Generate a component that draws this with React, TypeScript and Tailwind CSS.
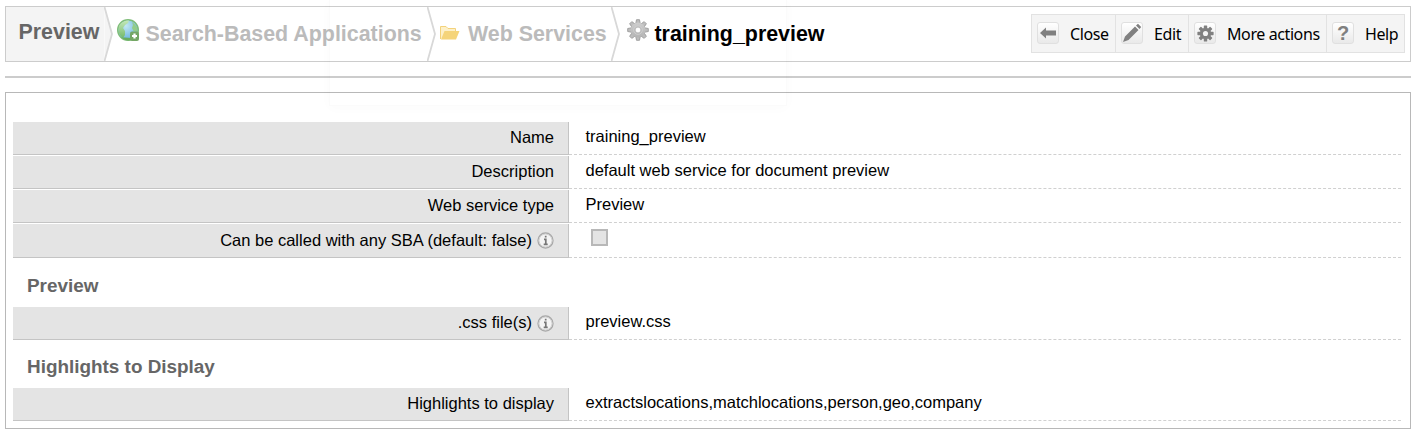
import React from "react";

const sans = "font-['Liberation_Sans',Arial,sans-serif]";

function Chevron({ filled }: { filled?: boolean }) {
  return (
    <svg width="9" height="54" viewBox="0 0 9 54" className="block shrink-0">
      <path d="M0.5 0 L8 27 L0.5 54" fill={filled ? "#f4f4f4" : "none"} stroke="#d8d8d8" strokeWidth="1.8" />
    </svg>
  );
}

function Globe() {
  return (
    <svg width="22" height="22" viewBox="0 0 22 22" className="block">
      <defs>
        <radialGradient id="sea" cx="0.4" cy="0.3" r="0.75">
          <stop offset="0" stopColor="#c3e8f2" />
          <stop offset="1" stopColor="#62aedb" />
        </radialGradient>
        <linearGradient id="land" x1="0" y1="0" x2="0" y2="1">
          <stop offset="0" stopColor="#c4e8b8" />
          <stop offset="1" stopColor="#74b968" />
        </linearGradient>
      </defs>
      <circle cx="11" cy="11" r="10.3" fill="url(#sea)" stroke="#7fbd78" strokeWidth="1.4" />
      <path d="M2 7 Q5 1.500 12 1.500 L11 4 L8 6 L6 9 L8 12 L8 16 L6 19 Q0 15 2 7Z" fill="url(#land)" />
      <path d="M15 3 Q21 7 20.500 13 L16.500 12 L15 9 L16 6Z" fill="#93cd88" />
      <path d="M4 18.500 Q9 22.500 15 21 L14 19 L8 18.500Z" fill="#68ad5d" />
      <rect x="13" y="12.500" width="9" height="9.500" rx="2" fill="#74a765" />
      <path d="M17.500 14.500V19.500M15 17H20" stroke="#fff" strokeWidth="2.200" />
    </svg>
  );
}

function Folder() {
  return (
    <svg width="20" height="14" viewBox="0 0 20 14" className="block">
      <path d="M0.500 13V0.500H6L8 2.500H15.500V5" fill="#fdf0c8" stroke="#f3d27b" />
      <path d="M1 13.500L4.500 5H19.500L16 13.500Z" fill="#f5d47a" />
    </svg>
  );
}

const teeth = [0, 45, 90, 135, 180, 225, 270, 315];

function SilverGear() {
  return (
    <svg width="22" height="22" viewBox="-11 -11 22 22" className="block">
      <defs>
        <linearGradient id="silver" gradientUnits="userSpaceOnUse" x1="0" y1="-10" x2="0" y2="10">
          <stop offset="0" stopColor="#d2d2d2" />
          <stop offset="1" stopColor="#b0b0b0" />
        </linearGradient>
      </defs>
      <g stroke="#9c9c9c" strokeWidth="0.900">
        {teeth.map((a) => (
          <path key={a} d="M-2.300 -6L-1.500 -10.300H1.500L2.300 -6Z" fill="#bdbdbd" transform={`rotate(${a})`} />
        ))}
      </g>
      <circle r="7.500" fill="url(#silver)" />
      <circle r="4.400" fill="none" stroke="#cdcdcd" strokeWidth="1" />
      <circle r="2.900" fill="#fff" stroke="#aaa" strokeWidth="0.700" />
    </svg>
  );
}

function FlatGear() {
  return (
    <svg width="17" height="17" viewBox="-11 -11 22 22" className="block">
      {teeth.map((a) => (
        <rect key={a} x="-2.200" y="-10.500" width="4.400" height="6" rx="0.800" fill="#808080" transform={`rotate(${a})`} />
      ))}
      <circle r="7.300" fill="#808080" />
      <circle r="3.300" fill="#f4f4f4" />
    </svg>
  );
}

function IconTile({ children }: { children: React.ReactNode }) {
  return (
    <span className="-mt-px flex h-[22px] w-[22px] shrink-0 items-center justify-center rounded-[3px] border border-[#e0e0e0] bg-gradient-to-b from-white to-[#e9e9e9]">
      {children}
    </span>
  );
}

function ToolButton({ icon, label, width }: { icon: React.ReactNode; label: string; width: string }) {
  return (
    <button className={`flex h-full items-center gap-[11px] border-l border-[#e2e2e2] pl-[5px] ${width}`}>
      <IconTile>{icon}</IconTile>
      <span className="mt-px whitespace-nowrap">{label}</span>
    </button>
  );
}

function Info() {
  return (
    <svg width="17" height="17" viewBox="0 0 17 17" className="mt-[2px] block">
      <circle cx="8.500" cy="8.500" r="7.500" fill="#f4f4f4" stroke="#a8a8a8" strokeWidth="1.300" />
      <circle cx="8.500" cy="8.500" r="6.500" fill="none" stroke="#cfcfcf" strokeWidth="1" />
      <path d="M8.700 3.800V5.600M7 7.300H8.800V12M6.700 12.300H10.700" stroke="#777" strokeWidth="1.700" fill="none" />
    </svg>
  );
}

function Row({ label, info, height, children }: { label: string; info?: boolean; height: string; children: React.ReactNode }) {
  return (
    <div className={`flex ${height}`}>
      <div className="flex w-[556px] shrink-0 items-center justify-end gap-[5px] border-r border-b border-[#c4c4c4] bg-[#e4e4e4] pr-[14px] pb-[2px]">
        <span>{label}</span>
        {info && <Info />}
      </div>
      <div className="flex w-[832px] items-center border-b border-dashed border-[#d0d0d0] pb-[4px] pl-[16.5px]">{children}</div>
    </div>
  );
}

export default function App() {
  return (
    <div className={`relative h-[437px] w-[1419px] overflow-hidden bg-white pt-[6px] pl-[5px] text-[16.5px] leading-[20px] text-black ${sans}`}>
      <header className="flex h-[56px] w-[1406px] border border-[#ccc] text-[21.4px] leading-[24px] font-bold">
        <div className="w-[98px] bg-[#f4f4f4] pt-[13px] pl-[12.5px] text-[#666]">Preview</div>
        <Chevron filled />
        <div className="flex w-[314px] pl-[4px]">
          <div className="mt-[12px]"><Globe /></div>
          <span className="mt-[15px] ml-[6.5px] whitespace-nowrap text-[#bbb]">Search-Based Applications</span>
        </div>
        <Chevron />
        <div className="flex w-[175px] pl-[4px]">
          <div className="mt-[19px]"><Folder /></div>
          <span className="mt-[15px] ml-[8px] whitespace-nowrap text-[#bbb]">Web Services</span>
        </div>
        <Chevron />
        <div className="flex grow pl-[7px]">
          <div className="mt-[12px]"><SilverGear /></div>
          <span className="mt-[15px] ml-[5.5px]">training_preview</span>
        </div>
        <nav className="mt-[7px] mr-[5px] flex h-[39px] w-[374px] shrink-0 border-y border-r border-[#e2e2e2] bg-[#f4f4f4] font-['Noto_Sans',sans-serif] text-[16px] font-normal tracking-[-0.4px]">
          <ToolButton label="Close" width="w-[84px]" icon={<svg width="18" height="14" viewBox="0 0 18 14"><path d="M1 7L7 1.500V4.500H17V9.500H7V12.500Z" fill="#808080" /></svg>} />
          <ToolButton label="Edit" width="w-[73px]" icon={<svg width="20" height="20" viewBox="0 0 20 20"><path d="M1 19L3 13.500L13 3.500L16.500 7L6.500 17ZM14 2.500L16 0.800L19.200 4L17.500 6Z" fill="#808080" /></svg>} />
          <ToolButton label="More actions" width="w-[138px]" icon={<FlatGear />} />
          <ToolButton label="Help" width="w-[78px]" icon={<span className="font-['Liberation_Sans',sans-serif] text-[20px] font-bold text-[#808080]">?</span>} />
        </nav>
      </header>
      <div className="mt-[14px] h-[2px] w-[1406px] bg-[#ccc]" />
      <main className="mt-[14px] h-[337px] w-[1406px] border border-[#b8b8b8] pt-[29px] pl-[7px]">
        <div className="flex flex-col gap-px">
          <Row label="Name" height="h-[33px]">training_preview</Row>
          <Row label="Description" height="h-[33px]">default web service for document preview</Row>
          <Row label="Web service type" height="h-[33px]">Preview</Row>
          <Row label="Can be called with any SBA (default: false)" info height="h-[34px]">
            <span className="mt-[-3px] ml-[5.5px] h-[17px] w-[17px] border-2 border-[#b8b8b8] bg-[#e4e4e4]" />
          </Row>
        </div>
        <h2 className="h-[49px] pt-[17px] pl-[14px] text-[18.9px] leading-[22px] font-bold text-[#666]">Preview</h2>
        <Row label=".css file(s)" info height="h-[33px]">preview.css</Row>
        <h2 className="h-[48px] pt-[16px] pl-[14px] text-[18.9px] leading-[22px] font-bold text-[#666]">Highlights to Display</h2>
        <Row label="Highlights to display" height="h-[33px]">extractslocations,matchlocations,person,geo,company</Row>
      </main>
      <div className="pointer-events-none absolute top-0 left-[329px] h-[106px] w-[458px] border-x border-b border-black/[0.015] shadow-[0_2px_12px_rgba(0,0,0,0.02)]" />
    </div>
  );
}
